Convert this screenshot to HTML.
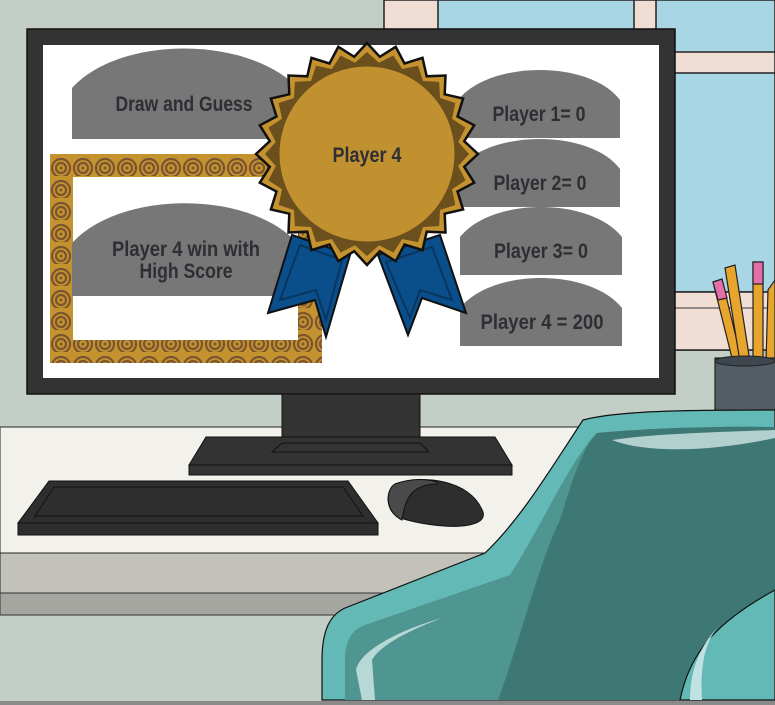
<!DOCTYPE html>
<html><head><meta charset="utf-8"><style>
html,body{margin:0;padding:0;background:#c3cec6;}
svg{display:block}
text{font-family:"Liberation Sans Narrow","Liberation Sans",sans-serif;font-weight:bold;fill:#2e2e34;text-anchor:middle}
</style></head><body>
<svg width="775" height="705" viewBox="0 0 775 705" xmlns="http://www.w3.org/2000/svg">
<defs>
<pattern id="pt" x="50" y="154" width="22" height="22" patternUnits="userSpaceOnUse">
<rect width="22" height="22" fill="#c4922e"/>
<circle cx="11" cy="14" r="9" fill="none" stroke="#7a5530" stroke-width="2.2"/>
<circle cx="11" cy="14" r="5" fill="none" stroke="#7a5530" stroke-width="2.2"/>
<circle cx="11" cy="14" r="1.5" fill="#7a5530"/>
</pattern>
</defs>
<rect width="775" height="705" fill="#c3cec6"/>
<!-- window -->
<rect x="384" y="0" width="391" height="350" fill="#f0ddd4" stroke="#222" stroke-width="1.5"/>
<rect x="438" y="0" width="196" height="350" fill="#a9d6e5" stroke="#222" stroke-width="1.5"/>
<rect x="656" y="0" width="119" height="292" fill="#a9d6e5" stroke="#222" stroke-width="1.5"/>
<rect x="634" y="52" width="141" height="21" fill="#f0ddd4" stroke="#222" stroke-width="1.5"/>
<rect x="384" y="292" width="391" height="58" fill="#f0ddd4" stroke="#222" stroke-width="1.5"/>
<line x1="384" y1="308" x2="775" y2="308" stroke="#333" stroke-width="1"/>
<!-- pencils -->
<g stroke="#222" stroke-width="1.2">
<polygon points="713,282 722,279 742,362 733,362" fill="#e8a52e"/>
<polygon points="713,282 722,279 727,298 718,300" fill="#e36ea8"/>
<polygon points="725,268 735,265 750,362 740,362" fill="#e8a52e"/>
<rect x="753" y="262" width="10" height="100" fill="#e8a52e"/>
<rect x="753" y="262" width="10" height="22" fill="#e36ea8"/>
<polygon points="768,290 775,280 775,362 766,362" fill="#e8a52e"/>
</g>
<rect x="715" y="358" width="62" height="55" fill="#525d66" stroke="#222" stroke-width="1.2"/>
<ellipse cx="745" cy="361" rx="30" ry="5" fill="#3f474e" stroke="#222"/>
<!-- desk -->
<rect x="0" y="427" width="775" height="126" fill="#f3f1eb" stroke="#222" stroke-width="1"/>
<rect x="0" y="553" width="775" height="40" fill="#c2c2ba" stroke="#222" stroke-width="1"/>
<rect x="0" y="593" width="775" height="22" fill="#a6a6a1" stroke="#333" stroke-width="1"/>
<!-- monitor -->
<rect x="27" y="29" width="648" height="365" fill="#333" stroke="#111" stroke-width="1.5"/>
<rect x="43" y="45" width="616" height="333" fill="#fff"/>
<rect x="282" y="394" width="138" height="50" fill="#333" stroke="#111"/>
<polygon points="206,437 495,437 512,465 189,465" fill="#333" stroke="#111"/>
<polygon points="282,443 420,443 429,452 272,452" fill="#333" stroke="#111"/>
<rect x="189" y="465" width="323" height="10" fill="#333" stroke="#111"/>
<!-- keyboard -->
<polygon points="49,481 348,481 378,523 18,523" fill="#2e2e2e" stroke="#111"/>
<polygon points="54,487 343,487 363,516 35,516" fill="#2e2e2e" stroke="#111"/>
<rect x="18" y="523" width="360" height="12" fill="#2e2e2e" stroke="#111"/>
<!-- mouse -->
<path d="M395,484 C420,475 470,478 483,512 C488,530 440,530 400,518 C385,512 385,490 395,484Z" fill="#2e2e2e" stroke="#111"/>
<path d="M395,484 C420,475 440,482 438,484 C415,484 405,495 402,520 C385,512 385,490 395,484Z" fill="#4a4a4a" stroke="#111"/>
<!-- chair -->
<path d="M583,420 C620,410 700,410 775,410 V700 H322 V660 C322,630 330,615 345,608 L485,553 C520,520 550,470 583,420Z" fill="#62b9b6" stroke="#111" stroke-width="1.2"/>
<path d="M597,433 C650,428 720,426 775,427 V700 H345 V660 C345,640 352,630 365,625 L510,575 C545,520 570,460 597,433Z" fill="#4f9591"/>
<path d="M597,433 C650,428 720,426 775,427 V700 H498 C520,640 540,560 560,520 C575,470 585,445 597,433Z" fill="#3e7874"/>
<path d="M775,590 C720,620 690,650 680,700 H775Z" fill="#62b9b6" stroke="#111" stroke-width="1.2"/>
<path d="M612,440 C650,455 720,450 775,438 V430 C720,432 650,434 612,440Z" fill="#b2d0cd"/>
<path d="M442,618 C410,630 380,645 372,660 L375,700 H362 L356,670 C360,650 400,630 442,618Z" fill="#b8d8d6"/>
<path d="M720,625 C705,640 700,665 702,700 H690 C690,670 700,645 720,625Z" fill="#c0e2e2"/>
<rect x="0" y="701" width="775" height="4" fill="#8a8a8a"/>
<!-- screen contents -->
<path d="M72,139 V88 C120,35 250,35 300,90 V139Z" fill="#777"/>
<text x="184" y="111" font-size="21" textLength="137" lengthAdjust="spacingAndGlyphs">Draw and Guess</text>
<rect x="50" y="154" width="272" height="209" fill="url(#pt)"/>
<rect x="73" y="177" width="225" height="163" fill="#fff"/>
<path d="M72,296 V243 C120,190 250,190 297,243 V296Z" fill="#777"/>
<text x="186" y="256" font-size="21" textLength="148" lengthAdjust="spacingAndGlyphs">Player 4 win with</text>
<text x="186" y="278" font-size="21" textLength="93" lengthAdjust="spacingAndGlyphs">High Score</text>
<g fill="#777">
<path d="M458,138 V100 C490,60 590,60 620,100 V138Z"/>
<path d="M458,207 V169 C490,129 590,129 620,169 V207Z"/>
<path d="M460,275 V237 C492,197 590,197 622,237 V275Z"/>
<path d="M460,346 V308 C492,268 590,268 622,308 V346Z"/>
</g>
<text x="539" y="121" font-size="21" textLength="93" lengthAdjust="spacingAndGlyphs">Player 1= 0</text>
<text x="540" y="190" font-size="21" textLength="93" lengthAdjust="spacingAndGlyphs">Player 2= 0</text>
<text x="541" y="258" font-size="21" textLength="94" lengthAdjust="spacingAndGlyphs">Player 3= 0</text>
<text x="542" y="329" font-size="21" textLength="123" lengthAdjust="spacingAndGlyphs">Player 4 = 200</text>
<!-- ribbons -->
<polygon points="292,235 350,255 326,337 315,300 268,313" fill="#0a4f8c" stroke="#111" stroke-width="2"/>
<polygon points="300,245 342,260 326,320 316,290 280,300" fill="none" stroke="#08365f" stroke-width="2"/>
<polygon points="378,255 440,235 466,313 422,298 408,335" fill="#0a4f8c" stroke="#111" stroke-width="2"/>
<polygon points="386,262 432,247 452,300 420,290 410,318" fill="none" stroke="#08365f" stroke-width="2"/>
<!-- seal -->
<polygon id="seal" fill="#c4922e" stroke="#111" stroke-width="2.5" points=""/>
<polygon id="seal2" fill="#6b4f1c" points=""/>
<circle cx="367" cy="154" r="88" fill="#c2912f" stroke="#6b4f1c" stroke-width="1"/>
<text x="367" y="162" font-size="21" textLength="69" lengthAdjust="spacingAndGlyphs">Player 4</text>
</svg>
<script>
function star(id,ro,ri,n){var p=[];for(var i=0;i<n*2;i++){var a=Math.PI*i/n-Math.PI/2;var r=i%2?ri:ro;p.push((367+r*Math.cos(a)).toFixed(1)+","+(154+r*Math.sin(a)).toFixed(1));}document.getElementById(id).setAttribute("points",p.join(" "));}
star("seal",111,98,24);star("seal2",102,92,24);
</script>
</body></html>
